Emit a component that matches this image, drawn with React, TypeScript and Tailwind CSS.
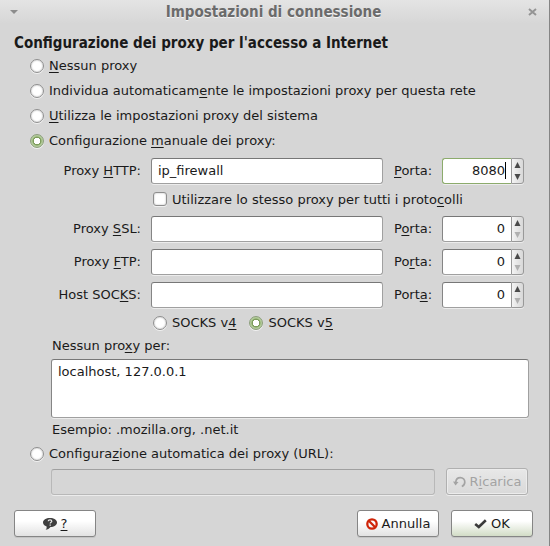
import React, { useState } from "react";

interface RadioProps {
  name: string;
  value: string;
  current: string;
  onSelect: (value: string) => void;
  children: React.ReactNode;
}

// Round option with its label
const Radio: React.FC<RadioProps> = ({ name, value, current, onSelect, children }) => {
  return (
    <label className="flex items-center gap-[5px] whitespace-nowrap">
      <input
        type="radio"
        name={name}
        value={value}
        checked={current === value}
        onChange={() => onSelect(value)}
        className="size-[14px] shrink-0 appearance-none rounded-full border border-[#8e8e8e] bg-white shadow-[inset_0_0_2px_#b0b0b0,0_1px_0_#f0f0f0] checked:border-[#8a9c7a] checked:bg-[radial-gradient(circle,#ffffff_0_3px,#7c9c5c_3px_4px,#b5d694_5px)]"
      />
      <span>{children}</span>
    </label>
  );
};

interface SpinProps {
  id: string;
  value: string;
  active?: boolean;
}

// Port number with the up / down arrows
const PortInput: React.FC<SpinProps> = ({ id, value, active }) => {
  const [port, setPort] = useState(value);
  const step = (by: number) => setPort(String(Math.max(0, Number(port) + by)));
  return (
    <div className="relative flex h-[26px] w-[82px] rounded-[3px] shadow-[0_1px_0_#ececec]">
      <input
        id={id}
        value={port}
        onChange={(e) => setPort(e.target.value)}
        className={
          active
            ? "w-[69px] rounded-l-[3px] border border-r-0 border-[#8cab6c] bg-white pr-[6px] pb-[2px] text-right outline-none"
            : "w-[69px] rounded-l-[3px] border border-r-0 border-[#a0a0a0] border-t-[#777777] border-l-[#858585] bg-white pr-[6px] pb-[2px] text-right outline-none"
        }
      />
      {active && <span className="absolute top-[4px] left-[63px] h-[17px] w-px bg-black" />}
      <div className="flex w-[13px] flex-col rounded-r-[3px] border border-[#999999] bg-linear-to-r from-[#f4f4f4] to-[#d8d8d8]">
        <button
          type="button"
          aria-label="Aumenta"
          onClick={() => step(1)}
          className="flex flex-1 items-center justify-center text-[#4a4a4a]"
        >
          <svg width="7" height="6" viewBox="0 0 7 6" fill="currentColor">
            <path d="M3.500 0L6.500 6H.5z" />
          </svg>
        </button>
        <button
          type="button"
          aria-label="Diminuisci"
          disabled={port === "0"}
          onClick={() => step(-1)}
          className="flex flex-1 items-center justify-center text-[#4a4a4a] disabled:text-[#b0b0b0]"
        >
          <svg width="7" height="6" viewBox="0 0 7 6" fill="currentColor">
            <path d="M.5 0H6.500L3.500 6z" />
          </svg>
        </button>
      </div>
    </div>
  );
};

interface ProxyRowProps {
  id: string;
  label: React.ReactNode;
  portLabel: React.ReactNode;
  host?: string;
  port: string;
  active?: boolean;
}

const ProxyRow: React.FC<ProxyRowProps> = ({ id, label, portLabel, host = "", port, active }) => {
  return (
    <div className="flex items-center pr-[5px]">
      <label htmlFor={`${id}-host`} className="w-[90px] shrink-0 pb-[2px] text-right whitespace-nowrap">
        {label}
      </label>
      <input
        id={`${id}-host`}
        defaultValue={host}
        className="ml-[10px] h-[26px] min-w-0 flex-1 rounded-[3px] border border-[#a0a0a0] border-t-[#777777] border-l-[#858585] bg-white px-[6px] pb-[2px] shadow-[0_1px_0_#ececec] outline-none"
      />
      <label htmlFor={`${id}-port`} className="ml-[11px] w-[48px] shrink-0 pb-[2px] whitespace-nowrap">
        {portLabel}
      </label>
      <PortInput id={`${id}-port`} value={port} active={active} />
    </div>
  );
};

const buttonClass =
  "flex h-[27px] w-[82px] items-center justify-center gap-1 rounded-[3px] border border-[#858585] bg-linear-to-b from-white from-40% to-[#e2e2e2] shadow-[0_1px_0_#c4c4c4]";

export default function App() {
  const [mode, setMode] = useState("manual");
  const [socks, setSocks] = useState("v5");

  return (
    <div className="min-h-screen border-r border-[#858585] bg-[#d6d6d6] font-['DejaVu_Sans',sans-serif] text-[13px] leading-[17px] text-[#1a1a1a] [&_u]:decoration-1 [&_u]:underline-offset-2">
      {/* Title bar */}
      <header className="flex h-6 items-center bg-linear-to-b from-[#e4e4e4] to-[#d6d6d6] pr-3 pl-[9px]">
        <button type="button" aria-label="Menu" className="text-[#8c8c8c]">
          <svg width="10" height="6" viewBox="0 0 10 6" fill="currentColor">
            <path d="M1 1H9L5 5z" />
          </svg>
        </button>
        <h1 className="flex-1 text-center font-['DejaVu_Sans_Condensed','DejaVu_Sans',sans-serif] text-[15px] font-bold text-[#6b6b6b] [text-shadow:0_1px_0_#f4f4f4]">
          Impostazioni di connessione
        </h1>
        <button type="button" aria-label="Chiudi" className="text-[#949494]">
          <svg width="9" height="8" viewBox="0 0 9 8" fill="none" stroke="currentColor" strokeWidth="2">
            <path d="M1 1L8 7M8 1L1 7" />
          </svg>
        </button>
      </header>

      <form className="pt-[9px] pr-5 pb-[9px] pl-[30px]" onSubmit={(e) => e.preventDefault()}>
        <h2 className="-ml-4 h-5 font-['DejaVu_Sans_Condensed','DejaVu_Sans',sans-serif] text-[15px] leading-5 font-bold whitespace-nowrap">
          Configurazione dei proxy per l'accesso a Internet
        </h2>
        <div className="grid auto-rows-[25px] items-center justify-items-start">
          <Radio name="mode" value="none" current={mode} onSelect={setMode}>
            <u>N</u>essun proxy
          </Radio>
          <Radio name="mode" value="detect" current={mode} onSelect={setMode}>
            Individua automaticam<u>e</u>nte le impostazioni proxy per questa rete
          </Radio>
          <Radio name="mode" value="system" current={mode} onSelect={setMode}>
            <u>U</u>tilizza le impostazioni proxy del sistema
          </Radio>
          <Radio name="mode" value="manual" current={mode} onSelect={setMode}>
            Configurazione <u>m</u>anuale dei proxy:
          </Radio>
        </div>

        {/* Manual settings */}
        <div className="pt-[5px] pl-[21px]">
          <ProxyRow
            id="http"
            label={<>Proxy <u>H</u>TTP:</>}
            portLabel={<><u>P</u>orta:</>}
            host="ip_firewall"
            port="8080"
            active
          />
          <label className="ml-[102px] flex h-8 items-center gap-[5px] pb-[2px] whitespace-nowrap">
            <input
              type="checkbox"
              className="size-[14px] appearance-none rounded-[3px] border border-[#8e8e8e] bg-white shadow-[inset_0_0_2px_#b0b0b0,0_1px_0_#f0f0f0] checked:bg-[#b5d694]"
            />
            <span>Utilizzare lo stesso proxy per tutti i proto<u>c</u>olli</span>
          </label>
          <div className="flex flex-col gap-[7px]">
            <ProxyRow id="ssl" label={<>Proxy <u>S</u>SL:</>} portLabel={<>P<u>o</u>rta:</>} port="0" />
            <ProxyRow id="ftp" label={<>Proxy <u>F</u>TP:</>} portLabel={<>Po<u>r</u>ta:</>} port="0" />
            <ProxyRow id="socks" label={<>Host SOC<u>K</u>S:</>} portLabel={<>Port<u>a</u>:</>} port="0" />
          </div>
          <div className="ml-[102px] flex h-[29px] items-center gap-[13px]">
            <Radio name="socks" value="v4" current={socks} onSelect={setSocks}>
              SOCKS v<u>4</u>
            </Radio>
            <Radio name="socks" value="v5" current={socks} onSelect={setSocks}>
              SOCKS v<u>5</u>
            </Radio>
          </div>
          <label htmlFor="no-proxy" className="ml-px block">
            Nessun pro<u>x</u>y per:
          </label>
          <textarea
            id="no-proxy"
            defaultValue="localhost, 127.0.0.1"
            className="mt-[5px] block h-[59px] w-full resize-none rounded-[3px] border border-[#a0a0a0] border-t-[#777777] border-l-[#858585] bg-white px-[6px] py-[3px] shadow-[0_1px_0_#ececec] outline-none"
          />
          <p className="ml-px leading-6">Esempio: .mozilla.org, .net.it</p>
        </div>

        <div className="flex h-[23px] items-center">
          <Radio name="mode" value="url" current={mode} onSelect={setMode}>
            Configura<u>z</u>ione automatica dei proxy (URL):
          </Radio>
        </div>
        <div className="mt-[3px] flex items-end gap-[11px] pr-px pl-[21px]">
          <input
            disabled
            aria-label="Configurazione automatica dei proxy (URL)"
            className="h-[26px] min-w-0 flex-1 rounded-[3px] border border-[#b8b8b8] border-t-[#a0a0a0] bg-[#d6d6d6] px-[6px] shadow-[0_1px_0_#ececec]"
          />
          <button
            type="button"
            disabled
            className="flex h-[27px] w-[82px] items-center justify-center gap-1 rounded-[3px] border border-[#b0b0b0] bg-linear-to-b from-[#e8e8e8] to-[#d9d9d9] text-[#a3a3a3] shadow-[0_1px_0_#ececec,inset_0_0_0_1px_#ececec]"
          >
            <svg width="13" height="12" viewBox="0 0 13 12" fill="none">
              <path d="M2.800 6C3 3.300 5 1.600 7.300 1.600C9.900 1.600 11.800 3.500 11.800 6C11.800 8.200 10.500 9.800 8.800 10.500" stroke="currentColor" strokeWidth="1.700" />
              <path d="M0 5.500L5.500 6L2.500 9.500z" fill="currentColor" />
            </svg>
            <span>R<u>i</u>carica</span>
          </button>
        </div>

        {/* Dialog buttons */}
        <div className="mt-[15px] -mr-1 -ml-4 flex">
          <button type="button" className={buttonClass}>
            <svg width="14" height="13" viewBox="0 0 14 13">
              <path d="M7 1C11 1 14 2.800 14 5.500C14 8.200 11 10 7.500 10C6.500 11.500 4.500 12.800 2.500 12.800C3.500 12 3.800 11 3.600 9.500C1.500 8.800 0 7.500 0 5.500C0 2.800 3 1 7 1z" fill="#3f3f3f" />
              <path d="M5.200 4.200C5.200 2.500 8.800 2.500 8.800 4.200C8.800 5.300 7.200 5.100 7.200 6.500M7.200 7.400V8.700" fill="none" stroke="#e8e8e8" strokeWidth="1.200" />
            </svg>
            <u>?</u>
          </button>
          <div className="ml-auto flex gap-3">
            <button type="button" className={buttonClass}>
              <svg width="12" height="12" viewBox="0 0 12 12" fill="none" stroke="#cf2408" strokeWidth="2.300">
                <circle cx="6" cy="6" r="4.700" />
                <path d="M2.800 2.800L9.200 9.200" />
              </svg>
              Annulla
            </button>
            <button
              type="submit"
              className="flex h-[27px] w-[82px] items-center justify-center gap-1 rounded-[3px] border border-[#858585] bg-linear-to-b from-white from-40% to-[#d2dcc6] shadow-[0_1px_0_#c4c4c4]"
            >
              <svg width="13" height="10" viewBox="0 0 13 10" fill="none">
                <path d="M1.200 5L4.800 8L11.800 1.200" stroke="#3a3a3a" strokeWidth="2.600" />
              </svg>
              OK
            </button>
          </div>
        </div>
      </form>
    </div>
  );
}
